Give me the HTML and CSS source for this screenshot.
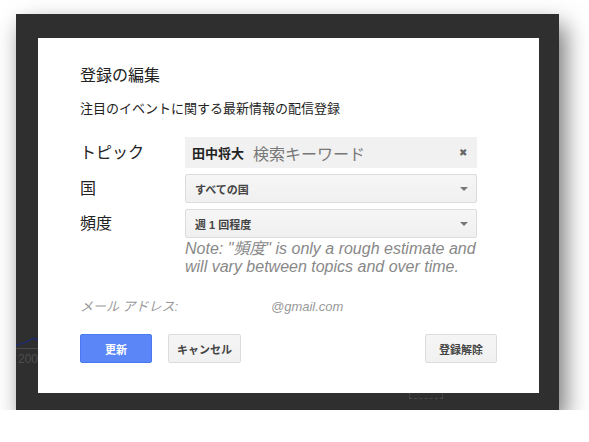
FILE: index.html
```html
<!DOCTYPE html>
<html lang="ja">
<head>
  <meta charset="UTF-8">
  <title>登録の編集</title>
  <link rel="stylesheet" href="styles.css">
</head>
<body>
  <div class="screen">
    <!-- dimmed page behind the dialog -->
    <div class="backdrop-page">
      <svg class="chart-bit" width="40" height="14" viewBox="0 0 40 14">
        <path d="M0 10 C6 9 10 8 14 5 S20 4 24 6" fill="none" stroke="#1e2a6e" stroke-width="1.5"/>
        <line x1="0" y1="13.5" x2="40" y2="13.5" stroke="#4a4a4a" stroke-width="1"/>
      </svg>
      <span class="chart-year">2005</span>
      <span class="dashed-box"></span>
    </div>

    <div class="dialog">
      <h2 class="dialog-title">登録の編集</h2>
      <p class="dialog-sub">注目のイベントに関する最新情報の配信登録</p>

      <div class="form">
        <div class="form-label">トピック</div>
        <div class="topic-field">
          <span class="topic-token">田中将大</span>
          <span class="topic-placeholder">検索キーワード</span>
          <span class="topic-clear">✖</span>
        </div>

        <div class="form-label">国</div>
        <div class="select">
          <span>すべての国</span>
          <span class="caret"></span>
        </div>

        <div class="form-label">頻度</div>
        <div class="select">
          <span>週 1 回程度</span>
          <span class="caret"></span>
        </div>

        <div></div>
        <div class="note">Note: "頻度" is only a rough estimate and will vary between topics and over time.</div>

        <div class="email-label">メール アドレス:</div>
        <div class="email-value">@gmail.com</div>
      </div>

      <div class="actions">
        <button class="btn btn-primary">更新</button>
        <button class="btn">キャンセル</button>
        <button class="btn btn-right">登録解除</button>
      </div>
    </div>
  </div>
</body>
</html>
```

FILE: styles.css
```css
body {
  margin: 0;
  background: #fff;
  font-family: "Liberation Sans", Arial, "Noto Sans CJK JP", sans-serif;
  color: #222;
}
.screen {
  position: relative;
  margin: 14px 0 0 16px;
  width: 543px;
  height: 396px;
  box-sizing: border-box;
  padding: 24px 20px 0 22px;
  background: #2f2f2f;
  box-shadow: 6px 11px 22px rgba(0,0,0,0.55);
  overflow: hidden;
}
.backdrop-page {
  position: absolute;
  left: 0;
  top: 0;
  width: 100%;
  height: 100%;
}
.chart-bit {
  position: absolute;
  left: 0;
  top: 321px;
}
.chart-year {
  position: absolute;
  left: 2px;
  top: 338px;
  font-size: 12px;
  color: #4e4e4e;
}
.dashed-box {
  position: absolute;
  left: 393px;
  top: 370px;
  width: 32px;
  height: 14px;
  border: 1px dashed #4a4a4a;
  border-top: none;
}
.dialog {
  position: relative;
  width: 501px;
  height: 355px;
  box-sizing: border-box;
  padding: 28px 42px 30px 42px;
  background: #fff;
  display: flex;
  flex-direction: column;
}
.dialog-title {
  margin: 0;
  font-size: 16px;
  line-height: 20px;
  font-weight: normal;
  color: #222;
}
.dialog-sub {
  margin: 13px 0 0 0;
  font-size: 13px;
  line-height: 20px;
  color: #222;
}
.form {
  margin-top: 18px;
  display: grid;
  grid-template-columns: 105px 292px;
  row-gap: 6px;
  align-items: center;
}
.form-label {
  font-size: 16px;
  line-height: 20px;
  color: #222;
}
.topic-field {
  height: 31px;
  background: #f1f1f1;
  display: flex;
  align-items: center;
  padding: 0 10px 0 7px;
}
.topic-token {
  font-size: 13px;
  font-weight: bold;
  color: #222;
}
.topic-placeholder {
  margin-left: 9px;
  font-size: 16px;
  color: #777;
}
.topic-clear {
  margin-left: auto;
  font-size: 10px;
  color: #666;
}
.select {
  height: 29px;
  box-sizing: border-box;
  border: 1px solid #dcdcdc;
  border-radius: 2px;
  background: linear-gradient(#f6f6f6, #f0f0f0);
  display: flex;
  align-items: center;
  padding: 0 8px 0 9px;
  font-size: 11px;
  font-weight: bold;
  color: #444;
}
.caret {
  margin-left: auto;
  width: 0;
  height: 0;
  border-left: 4px solid transparent;
  border-right: 4px solid transparent;
  border-top: 4px solid #777;
}
.note {
  margin-top: -4px;
  font-size: 16px;
  line-height: 18px;
  font-style: italic;
  color: #888;
}
.email-label,
.email-value {
  margin-top: 16px;
  font-size: 13px;
  line-height: 18px;
  font-style: italic;
  color: #999;
}
.email-value {
  padding-left: 86px;
}
.actions {
  margin-top: auto;
  display: flex;
  gap: 16px;
}
.btn {
  width: 73px;
  height: 29px;
  border: 1px solid #dcdcdc;
  border-radius: 2px;
  background: linear-gradient(#f5f5f5, #f1f1f1);
  font-family: inherit;
  font-size: 11px;
  font-weight: bold;
  color: #444;
  padding: 0;
}
.btn-primary {
  width: 72px;
  background: #5b86f7;
  border-color: #4a78ee;
  color: #fff;
}
.btn-right {
  margin-left: auto;
  width: 72px;
}
```
